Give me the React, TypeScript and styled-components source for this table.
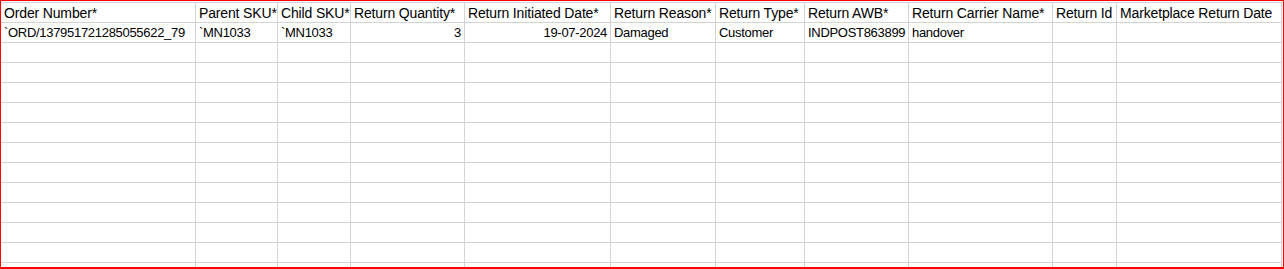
import React from "react";
import styled, { createGlobalStyle } from "styled-components";

const GlobalStyle = createGlobalStyle`
  body {
    margin: 0;
    background: #ffffff;
    font-family: "Liberation Sans", Arial, sans-serif;
  }
`;

const columns = [
  { title: "Order Number*", width: 195 },
  { title: "Parent SKU*", width: 82 },
  { title: "Child SKU*", width: 73 },
  { title: "Return Quantity*", width: 114, right: true },
  { title: "Return Initiated Date*", width: 146, right: true },
  { title: "Return Reason*", width: 105 },
  { title: "Return Type*", width: 89 },
  { title: "Return AWB*", width: 104 },
  { title: "Return Carrier Name*", width: 144 },
  { title: "Return Id", width: 64 },
  { title: "Marketplace Return Date", width: 165 },
];

const rows: string[][] = [
  [
    "`ORD/137951721285055622_79",
    "`MN1033",
    "`MN1033",
    "3",
    "19-07-2024",
    "Damaged",
    "Customer",
    "INDPOST863899",
    "handover",
    "",
    "",
  ],
];

const EMPTY_ROWS = 12;

const Frame = styled.div`
  width: 1284px;
  height: 269px;
  box-sizing: border-box;
  border: 1px solid #ff0000;
  border-bottom-width: 2px;
  padding-top: 1px;
  overflow: hidden;
  background: #ffffff;
`;

const Sheet = styled.div`
  border-top: 1px solid #d4d4d4;
`;

const Row = styled.div`
  display: grid;
  grid-template-columns: ${columns.map((c) => c.width + "px").join(" ")};
`;

// header cells use the regular size, values a touch smaller / tighter (Calibri digits are narrow)
const Cell = styled.div<{ $right?: boolean; $header?: boolean }>`
  height: 20px;
  box-sizing: border-box;
  border-right: 1px solid #d4d4d4;
  border-bottom: 1px solid #d4d4d4;
  padding: 0 ${(p) => (p.$right ? "3px" : "0")} 1px
    ${(p) => (p.$right ? "0" : "3px")};
  display: flex;
  align-items: flex-end;
  justify-content: ${(p) => (p.$right ? "flex-end" : "flex-start")};
  white-space: nowrap;
  overflow: hidden;
  color: #000000;
  font-size: ${(p) => (p.$header ? "14px" : "13px")};
  letter-spacing: ${(p) => (p.$header ? "-0.15px" : "-0.3px")};
  line-height: 16px;
`;

const App = () => {
  return (
    <>
      <GlobalStyle />
      <Frame>
        <Sheet>
          <Row>
            {columns.map((col, i) => (
              <Cell key={"h_" + i} $header>
                {col.title}
              </Cell>
            ))}
          </Row>
          {rows.map((row, ri) => (
            <Row key={"r_" + ri}>
              {row.map((value, ci) => (
                <Cell key={ci} $right={columns[ci].right}>
                  {value}
                </Cell>
              ))}
            </Row>
          ))}
          {Array.from({ length: EMPTY_ROWS }).map((_, ri) => (
            <Row key={"e_" + ri}>
              {columns.map((_, ci) => (
                <Cell key={ci} />
              ))}
            </Row>
          ))}
        </Sheet>
      </Frame>
    </>
  );
};

export default App;
